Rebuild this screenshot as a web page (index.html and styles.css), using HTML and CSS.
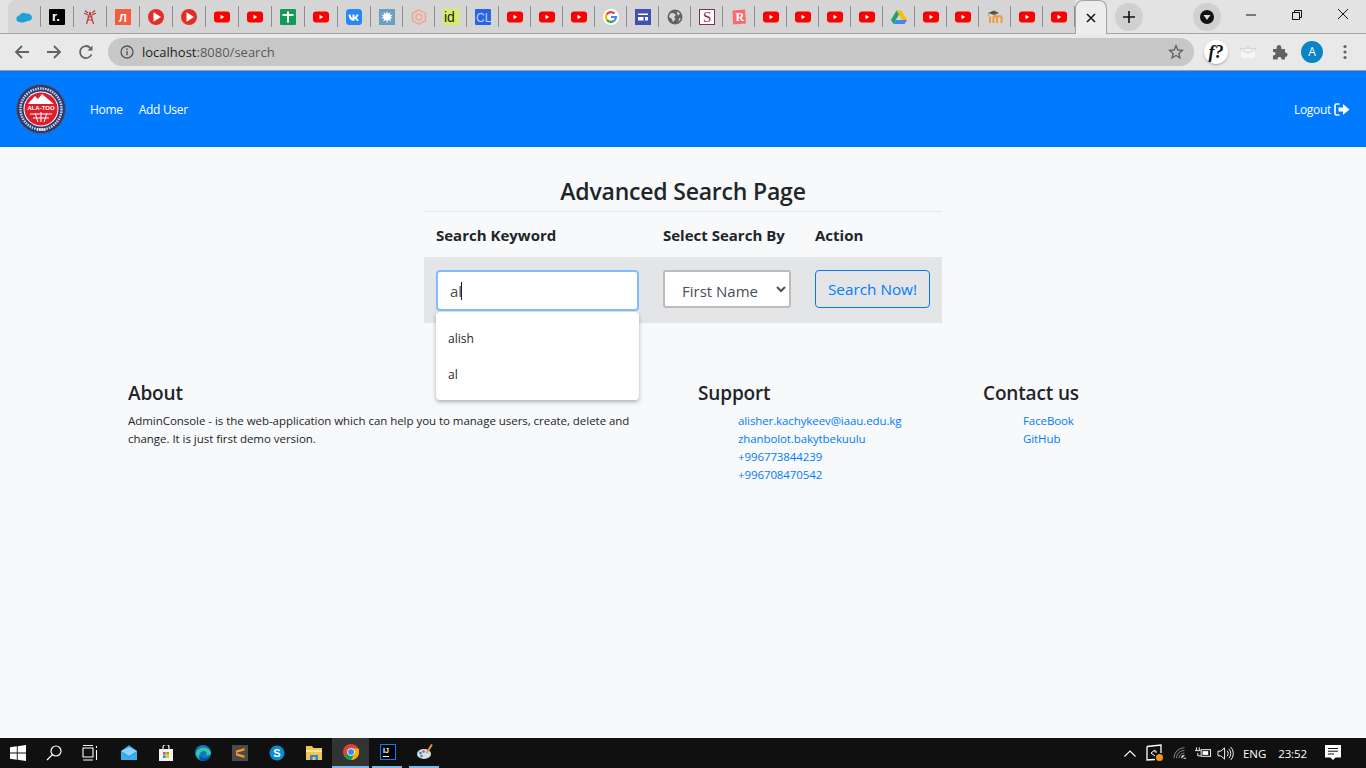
FILE: index.html
```html
<!DOCTYPE html>
<html>
<head>
    <meta charset="utf-8">
    <link rel="stylesheet" href="styles.css">
    <title>Advanced Search Page</title>
</head>
<body>

<!-- shared favicons -->
<svg class="defs" width="0" height="0">
    <symbol id="yt" viewBox="0 0 16 16"><rect x="0" y="2.500" width="16" height="11" rx="3" fill="#f00"/><path d="M6.500 5.800v4.400L10.200 8z" fill="#fff"/></symbol>
    <symbol id="play" viewBox="0 0 16 16"><circle cx="8" cy="8" r="8" fill="#e52d27"/><path d="M5.500 3.200v9.600L13 8z" fill="#fff"/></symbol>
</svg>

<div class="tabstrip">
    <div class="tab wide"><svg viewBox="0 0 16 16"><path d="M4 13C1 13 0 10.800 0.500 9 1 7 2.500 6.500 3.500 6.500 4.500 4 8 3 10 4.500 13 4 16 6 16 8.500 16 11 13.500 12.500 11 12 9 13.500 6 14 4 13z" fill="#1ea1d9"/></svg></div>
    <div class="tab wide"><svg viewBox="0 0 16 16"><rect width="16" height="16" rx="1" fill="#000"/><text x="3" y="12" class="fav-r">r.</text></svg></div>
    <div class="tab wide"><svg viewBox="0 0 16 16"><path d="M8 3 4.500 15M8 3l3.500 12M5.500 8h5M5 11h6M2 4l4 2M14 4l-4 2M3 1.500 6 4M13 1.500 10 4" stroke="#b83a3a" stroke-width="1.200" fill="none"/></svg></div>
    <div class="tab wide"><svg viewBox="0 0 16 16"><rect width="16" height="16" fill="#ee5e3f"/><text x="4" y="12.500" class="fav-l">Л</text></svg></div>
    <div class="tab wide"><svg><use href="#play"/></svg></div>
    <div class="tab wide"><svg><use href="#play"/></svg></div>
    <div class="tab wide"><svg><use href="#yt"/></svg></div>
    <div class="tab wide"><svg><use href="#yt"/></svg></div>
    <div class="tab wide"><svg viewBox="0 0 16 16"><rect width="16" height="16" rx="1" fill="#0f9d58"/><path d="M2.500 6h11M8 2.500V13.500" stroke="#fff" stroke-width="2"/></svg></div>
    <div class="tab wide"><svg><use href="#yt"/></svg></div>
    <div class="tab wide"><svg viewBox="0 0 16 16"><rect width="16" height="16" rx="3.500" fill="#2787f5"/><path d="M2.500 5.500h2c.3 2 1.200 3.200 2 3.500V5.500h2v2.700c.9-.2 1.700-1.300 2-2.700h2c-.3 1.700-1.200 2.800-2 3.400.9.500 1.900 1.500 2.400 2.900h-2.200c-.4-1.100-1.200-1.900-2.200-2.100v2.100H8C4.700 11.800 2.800 9.500 2.500 5.500z" fill="#fff"/></svg></div>
    <div class="tab"><svg viewBox="0 0 16 16"><rect width="16" height="16" fill="#6aa0bf"/><path d="M8 2l1 3 2.500-2-.8 3 3.300-.5-2.500 2.300 2.500 1.500-3 .3 1 3-2.700-1.800L8 14l-1-3.300-2.800 1.800 1-3-3.200-.3 2.600-1.700L2 5.500l3.200.5L4.500 3 7 5z" fill="#fff"/></svg></div>
    <div class="tab"><svg viewBox="0 0 16 16"><path d="M8 .8 14.500 4.400v7.200L8 15.200 1.500 11.600V4.400z" fill="none" stroke="#f0a58c" stroke-width="1.500"/><circle cx="8" cy="8" r="3" fill="none" stroke="#f0a58c" stroke-width="1.500"/></svg></div>
    <div class="tab"><svg viewBox="0 0 16 16"><rect width="16" height="16" fill="#d7ee62"/><text x="1" y="13" class="fav-id">id</text></svg></div>
    <div class="tab"><svg viewBox="0 0 16 16"><rect width="16" height="16" rx="1" fill="#2b63e3"/><text x="1" y="12.500" class="fav-cl">CL</text></svg></div>
    <div class="tab"><svg><use href="#yt"/></svg></div>
    <div class="tab"><svg><use href="#yt"/></svg></div>
    <div class="tab"><svg><use href="#yt"/></svg></div>
    <div class="tab"><svg viewBox="0 0 16 16"><circle cx="8" cy="8" r="8" fill="#fff"/><path d="M8 8h5A5 5 0 0 1 11.500 11.500" fill="none" stroke="#4285f4" stroke-width="2.200"/><path d="M3.800 10.600A5 5 0 0 0 11.500 11.500" fill="none" stroke="#34a853" stroke-width="2.200"/><path d="M3.800 5.400A5 5 0 0 0 3.800 10.600" fill="none" stroke="#fbbc05" stroke-width="2.200"/><path d="M3.800 5.400A5 5 0 0 1 11.500 4.500" fill="none" stroke="#ea4335" stroke-width="2.200"/></svg></div>
    <div class="tab"><svg viewBox="0 0 16 16"><rect width="16" height="16" fill="#3f51b5"/><path d="M3 4.500h10V6H3zM3 8h5.500v3.500H3zM10 8h3v3.500h-3z" fill="#fff"/></svg></div>
    <div class="tab"><svg viewBox="0 0 16 16"><circle cx="8" cy="8" r="7.500" fill="#5f6368"/><path d="M3 4.500 6.500 4 9 6 7 8 8.500 10 6 13 4.500 9.500 2 8zM10 2.500l3 2-1.500 2L10 5zM12 9l2 .5-2.500 3.500z" fill="#d5d5d5"/></svg></div>
    <div class="tab"><svg viewBox="0 0 16 16"><rect x=".5" y=".5" width="15" height="15" fill="#fff" stroke="#8d2a4a"/><text x="4" y="13" class="fav-s">S</text></svg></div>
    <div class="tab"><svg viewBox="0 0 16 16"><path d="M1.500 1.500 14 .5 15 14.500 2 15.500z" fill="#f86a6e"/><text x="4.500" y="12" class="fav-rr">R</text></svg></div>
    <div class="tab"><svg><use href="#yt"/></svg></div>
    <div class="tab"><svg><use href="#yt"/></svg></div>
    <div class="tab"><svg><use href="#yt"/></svg></div>
    <div class="tab"><svg><use href="#yt"/></svg></div>
    <div class="tab"><svg viewBox="0 0 16 16"><path d="M5.500 1.500h5L16 11h-5z" fill="#fbbc04"/><path d="M5.500 1.500 0 11l2.500 4L8 5.500z" fill="#1fa463"/><path d="M2.500 15h11l2.500-4H5z" fill="#4285f4"/></svg></div>
    <div class="tab"><svg><use href="#yt"/></svg></div>
    <div class="tab"><svg><use href="#yt"/></svg></div>
    <div class="tab"><svg viewBox="0 0 16 16"><path d="M3 7.500V14M6.500 14V8.500c0-2 3.500-2 3.500 0V14M10 8.500c0-2 4.500-2 4.500 0V14" fill="none" stroke="#f39a3c" stroke-width="2"/><path d="M1 4l6-2.500L12 4 7 6z" fill="#555"/><path d="M1.500 4v3" stroke="#f39a3c"/></svg></div>
    <div class="tab"><svg><use href="#yt"/></svg></div>
    <div class="tab"><svg><use href="#yt"/></svg></div>
    <div class="tab-active"><svg viewBox="0 0 10 10"><path d="M1 1l8 8M9 1 1 9" stroke="#111" stroke-width="1.500"/></svg></div>
    <div class="newtab"><svg viewBox="0 0 12 12"><path d="M6 0v12M0 6h12" stroke="#111" stroke-width="1.600"/></svg></div>
    <div class="tabsearch"><span class="tabsearch-dot"><svg viewBox="0 0 10 10"><path d="M1.500 3h7L5 8z" fill="#ddd"/></svg></span></div>
    <div class="winbtns">
        <svg viewBox="0 0 46 30"><path d="M18 15h10" stroke="#111"/></svg>
        <svg viewBox="0 0 46 30"><path d="M18.500 12.500h7v7h-7zM20.500 12.500v-2h7v7h-2" fill="none" stroke="#111"/></svg>
        <svg viewBox="0 0 46 30"><path d="M18 9l10 10M28 9 18 19" stroke="#111"/></svg>
    </div>
</div>

<div class="toolbar">
    <svg class="tool" viewBox="0 0 16 16"><path d="M15 8H2M8 2 2 8l6 6" fill="none" stroke="#5f6368" stroke-width="1.800"/></svg>
    <svg class="tool" viewBox="0 0 16 16"><path d="M1 8h13M8 2l6 6-6 6" fill="none" stroke="#5f6368" stroke-width="1.800"/></svg>
    <svg class="tool" viewBox="0 0 16 16"><path d="M13.500 10.500A6 6 0 1 1 12.300 3.800" fill="none" stroke="#5f6368" stroke-width="1.800"/><path d="M14.500 1.500v5h-5z" fill="#5f6368"/></svg>
    <div class="omnibox">
        <svg class="info" viewBox="0 0 14 14"><circle cx="7" cy="7" r="6" fill="none" stroke="#555" stroke-width="1.300"/><path d="M7 6v4.200M7 3.500v1.400" stroke="#555" stroke-width="1.400"/></svg>
        <span class="url"><span class="url-host">localhost</span>:8080/search</span>
        <svg class="star" viewBox="0 0 16 16"><path d="M8 1.800 9.800 6l4.500.4-3.400 3 1 4.400L8 11.500l-3.900 2.300 1-4.400-3.400-3L6.200 6z" fill="none" stroke="#5f6368" stroke-width="1.400"/></svg>
    </div>
    <div class="ext-f"><span>f?</span></div>
    <svg class="ext-mail" viewBox="0 0 16 14"><path d="M0 3.500h16V14H0z" fill="#f5f5f5" stroke="#ddd"/><path d="M0 3.500 8 8l8-4.500M4 4l4-3 4 3" fill="none" stroke="#ccc"/></svg>
    <svg class="ext-puzzle" viewBox="0 0 16 16"><path d="M1 5h3.500C4.500 2 5.500 1 7 1s2.500 1 2.500 4H13v3.500c2 0 2.500 1 2.500 2S15 13 13 13v2.500H9.500c0-2-1-2.500-2-2.500s-2 .5-2 2.500H1v-4c2 0 2.500-1 2.500-2S3 8 1 8z" fill="#5f6368"/></svg>
    <div class="avatar">A</div>
    <svg class="dots" viewBox="0 0 4 16"><circle cx="2" cy="2.500" r="1.600" fill="#5f6368"/><circle cx="2" cy="8" r="1.600" fill="#5f6368"/><circle cx="2" cy="13.500" r="1.600" fill="#5f6368"/></svg>
</div>

<div class="page">
    <nav class="navbar">
        <svg class="logo" viewBox="0 0 50 50">
            <circle cx="25" cy="25" r="24.500" fill="#2b3a6e" stroke="#4a5a8e"/>
            <circle cx="25" cy="25" r="20.500" fill="none" stroke="#cfd4e6" stroke-width="2.500" stroke-dasharray="1.500 1"/>
            <circle cx="25" cy="25" r="17.500" fill="#fff"/>
            <circle cx="25" cy="25" r="16.500" fill="#dd1f2d"/>
            <path d="M11 21 19 12l3 3 4-5 13 11z" fill="#fff"/>
            <rect x="9" y="20" width="32" height="7" fill="#dd1f2d"/>
            <text x="25" y="26" class="logo-text">ALA-TOO</text>
            <path d="M14 30h22M17 34h16M25 28v10M19 29l3 9M31 29l-3 9" stroke="#fff"/>
            <text x="25" y="46.500" class="logo-year">1996</text>
        </svg>
        <a href="#" class="nav-link">Home</a>
        <a href="#" class="nav-link">Add User</a>
        <a href="#" class="nav-logout">Logout
            <svg viewBox="0 0 16 13"><path d="M5.500 1H2.500A1.500 1.500 0 0 0 1 2.500v8A1.500 1.500 0 0 0 2.500 12h3" fill="none" stroke="#fff" stroke-width="1.600"/><path d="M4.500 4.500H9V1l6.500 5.500L9 12V8.500H4.500z" fill="#fff"/></svg>
        </a>
    </nav>

    <h3 class="title">Advanced Search Page</h3>

    <table class="search-table">
        <thead>
        <tr>
            <th class="col-key">Search Keyword</th>
            <th class="col-by">Select Search By</th>
            <th>Action</th>
        </tr>
        </thead>
        <tbody>
        <tr>
            <td class="keyword-cell">
                <div class="keyword-wrap">
                    <input class="keyword" type="text" value="al">
                    <span class="caret"></span>
                    <div class="suggest">
                        <div>alish</div>
                        <div>al</div>
                    </div>
                </div>
            </td>
            <td>
                <select class="search-by">
                    <option>First Name</option>
                </select>
            </td>
            <td><button class="btn-search">Search Now!</button></td>
        </tr>
        </tbody>
    </table>

    <footer class="foot">
        <div class="foot-col">
            <h5>About</h5>
            <p>AdminConsole - is the web-application which can help you to manage users, create, delete and change. It is just first demo version.</p>
        </div>
        <div class="foot-col">
            <h5>Support</h5>
            <ul>
                <li><a href="#">alisher.kachykeev@iaau.edu.kg</a></li>
                <li><a href="#">zhanbolot.bakytbekuulu</a></li>
                <li><a href="#">+996773844239</a></li>
                <li><a href="#">+996708470542</a></li>
            </ul>
        </div>
        <div class="foot-col">
            <h5>Contact us</h5>
            <ul>
                <li><a href="#">FaceBook</a></li>
                <li><a href="#">GitHub</a></li>
            </ul>
        </div>
    </footer>
</div>

<div class="taskbar">
    <div class="task sys"><svg viewBox="0 0 16 16"><path d="M0 2.300 6.800 1.300v6.200H0zM7.700 1.200 16 0v7.500H7.700zM0 8.400h6.800v6.300L0 13.700zM7.700 8.400H16V16l-8.300-1.200z" fill="#fff"/></svg></div>
    <div class="task sys"><svg viewBox="0 0 16 16"><circle cx="10" cy="6" r="5" fill="none" stroke="#fff" stroke-width="1.200"/><path d="M6.500 9.500 1 15" stroke="#fff" stroke-width="1.300"/></svg></div>
    <div class="task sys"><svg viewBox="0 0 16 16"><path d="M1 3h10v9H1zM1 .5h10M1 15h10M14.500 1v2M14.500 5v10" fill="none" stroke="#fff" stroke-width="1.100"/></svg></div>
    <div class="task first-app"><svg viewBox="0 0 16 16"><path d="M0 6 8 0l8 6v9H0z" fill="#1c9be6"/><path d="M0 6l8 5 8-5-8-4z" fill="#8fd2f7"/><path d="M0 15V7l8 5 8-5v8z" fill="#37ade9"/></svg></div>
    <div class="task"><svg viewBox="0 0 16 16"><path d="M1 4h14v12H1z" fill="#f3f3f3"/><path d="M5 5V2.500a3 3 0 0 1 6 0V5" fill="none" stroke="#f3f3f3" stroke-width="1.200"/><path d="M5 7h2.700v2.700H5z" fill="#f25022"/><path d="M8.300 7H11v2.700H8.300z" fill="#7fba00"/><path d="M5 10.300h2.700V13H5z" fill="#00a4ef"/><path d="M8.300 10.300H11V13H8.300z" fill="#ffb900"/></svg></div>
    <div class="task"><svg viewBox="0 0 16 16"><circle cx="8" cy="8" r="8" fill="#1377c9"/><path d="M1 8c1-6 13-8 15 0 0 2-3 2.500-5 2 2-2-1-5-4-3.500-3 1.500-3 5-.5 7.500C3.500 13.500 1 11 1 8z" fill="#34c9a5"/><path d="M8 16c-3-1-5-4-3-7-.7 2.500 2.500 5 6 4 1.500-.5 3-1 4-2.500-1 3.500-4 5.500-7 5.500z" fill="#0a4f9e"/></svg></div>
    <div class="task"><svg viewBox="0 0 16 16"><rect width="16" height="16" fill="#4a4a4a"/><path d="M12.500 3v2.500L4 8V5.500zM4 8l8.500 2.500V13L4 10.500z" fill="#f89822"/></svg></div>
    <div class="task"><svg viewBox="0 0 16 16"><circle cx="8" cy="8" r="7.500" fill="#0a8bd6"/><text x="8" y="12" class="skype-s">S</text></svg></div>
    <div class="task"><svg viewBox="0 0 16 16"><path d="M0 1h6l1.500 2H16v12H0z" fill="#f3c64f"/><path d="M0 5h16v2H0z" fill="#fbe59b"/><path d="M4 15v-5h8v5h-2.500v-3h-3v3z" fill="#2a8dd4"/></svg></div>
    <div class="task active-chrome"><svg viewBox="0 0 16 16"><circle cx="8" cy="8" r="8" fill="#db4437"/><path d="M8 8 1 12A8 8 0 0 0 8 16l4-7z" fill="#0f9d58"/><path d="M8 4.500h7.400A8 8 0 0 1 8 16l4-7z" fill="#f4b400"/><circle cx="8" cy="8" r="3.800" fill="#fff"/><circle cx="8" cy="8" r="3" fill="#4285f4"/></svg></div>
    <div class="task running"><svg viewBox="0 0 16 16"><rect x=".5" y=".5" width="15" height="15" fill="#000" stroke="#087cfa"/><text x="3" y="8.500" class="ij">IJ</text><path d="M3 12.500h6" stroke="#fff"/></svg></div>
    <div class="task running"><svg viewBox="0 0 16 16"><ellipse cx="7" cy="10" rx="7" ry="5" fill="#cfe0ea"/><circle cx="3.500" cy="9" r="1.300" fill="#2b7bd1"/><circle cx="6.500" cy="7.500" r="1.300" fill="#e64b3c"/><circle cx="4.500" cy="12" r="1.300" fill="#3aa655"/><path d="M15 .5 9.500 9" stroke="#e8912d" stroke-width="2"/></svg></div>

    <div class="tray">
        <svg class="tray-chev" viewBox="0 0 12 7"><path d="M.5 6.500 6 1l5.500 5.500" fill="none" stroke="#fff" stroke-width="1.100"/></svg>
        <svg class="tray-win" viewBox="0 0 18 18"><path d="M1 2.500 15 1v8M1 2.500V16l8-.5" fill="none" stroke="#fff" stroke-width="1.300"/><path d="M5 9l4-3v2h2M9 12 5 9" fill="none" stroke="#fff"/><circle cx="13.500" cy="13.500" r="3.500" fill="#f7941e"/></svg>
        <svg class="tray-wifi" viewBox="0 0 16 16"><path d="M1 14a12 12 0 0 1 12-12M4 14a9 9 0 0 1 9-9M7 14a6 6 0 0 1 6-6" fill="none" stroke="#9a9a9a"/><path d="M10 14a3 3 0 0 1 3-3" fill="none" stroke="#fff" stroke-width="1.200"/><path d="M12 14h3" stroke="#fff"/></svg>
        <svg class="tray-batt" viewBox="0 0 18 12"><path d="M1.500 0v3M4.500 0v3M0 3.500h6M3 6v3h3" fill="none" stroke="#fff"/><rect x="6.500" y="2.500" width="10" height="7" fill="none" stroke="#fff"/><rect x="8" y="4" width="6" height="4" fill="#fff"/></svg>
        <svg class="tray-vol" viewBox="0 0 18 16"><path d="M1 5.500h3L8 2v12l-4-3.500H1z" fill="none" stroke="#fff"/><path d="M10.500 5a4 4 0 0 1 0 6M12.500 3a7 7 0 0 1 0 10M14.500 1a10 10 0 0 1 0 14" fill="none" stroke="#fff"/></svg>
        <span class="tray-lang">ENG</span>
        <span class="tray-time">23:52</span>
        <svg class="tray-note" viewBox="0 0 16 16"><path d="M0 0h16v12.500h-5.500L8 15l-2.500-2.500H0z" fill="#fff"/><path d="M3 3.500h10M3 6.200h10M3 9h6" stroke="#111"/></svg>
    </div>
</div>

</body>
</html>
```

FILE: styles.css
```css
html, body {
    margin: 0;
    height: 100%;
}

body {
    width: 1366px;
    height: 768px;
    display: flex;
    flex-direction: column;
    overflow: hidden;
    font-family: "Open Sans", "Noto Sans", sans-serif;
    color: #212529;
    background: #f8f9fa;
}

.defs {
    position: absolute;
}

/* browser tabs */
.tabstrip {
    height: 34px;
    flex: none;
    box-sizing: border-box;
    display: flex;
    padding-left: 8px;
    background: #e3e3e3;
    border-bottom: 1px solid #a3a3a3;
}

.tab {
    width: 32px;
    height: 33px;
    flex: none;
    box-sizing: border-box;
    padding-right: 1px;
    display: flex;
    align-items: center;
    justify-content: center;
    background-color: #d5d5d5;
    background-image: linear-gradient(#8d8d8d, #8d8d8d);
    background-repeat: no-repeat;
    background-size: 1px 21px;
    background-position: right 6px;
}

.tab.wide {
    width: 33px;
}

.tab:first-child {
    border-top-left-radius: 8px;
}

.tab svg {
    width: 16px;
    height: 16px;
}

.tab-active {
    width: 32px;
    height: 34px;
    flex: none;
    display: flex;
    align-items: center;
    justify-content: center;
    background: #ededed;
    border: 1px solid #a3a3a3;
    border-bottom: 0;
    border-radius: 8px 8px 0 0;
    box-sizing: border-box;
}

.tab-active svg {
    width: 10px;
    height: 10px;
}

.newtab, .tabsearch {
    width: 28px;
    height: 28px;
    flex: none;
    margin-top: 3px;
    border-radius: 50%;
    background: #d0d0d0;
    display: flex;
    align-items: center;
    justify-content: center;
}

.newtab {
    margin-left: 8px;
}

.newtab svg {
    width: 12px;
    height: 12px;
}

.tabsearch {
    margin-left: 50px;
}

.tabsearch-dot {
    width: 14px;
    height: 14px;
    border-radius: 50%;
    background: #111;
    display: flex;
    align-items: center;
    justify-content: center;
}

.tabsearch-dot svg {
    width: 10px;
    height: 10px;
}

.winbtns {
    margin-left: auto;
    display: flex;
}

.winbtns svg {
    width: 46px;
    height: 30px;
}

.fav-r { font: bold 13px "Liberation Sans", sans-serif; fill: #fff; }
.fav-l { font: bold 11px "Liberation Sans", sans-serif; fill: #fff; }
.fav-id { font: 14px "Liberation Sans", sans-serif; fill: #222; }
.fav-cl { font: 12px "Liberation Sans", sans-serif; fill: #bcd2ff; }
.fav-s { font: 15px "Liberation Serif", serif; fill: #8d2a4a; }
.fav-rr { font: bold 12px "Liberation Serif", serif; fill: #fff; }

/* address bar */
.toolbar {
    height: 37px;
    flex: none;
    box-sizing: border-box;
    display: flex;
    align-items: center;
    padding: 0 0 0 14px;
    background: #e9e9e9;
    border-bottom: 1px solid #9a9a9a;
}

.tool {
    width: 16px;
    height: 16px;
    flex: none;
    margin-right: 16px;
}

.omnibox {
    width: 1086px;
    height: 28px;
    flex: none;
    box-sizing: border-box;
    margin-left: -2px;
    padding: 0 10px 0 12px;
    display: flex;
    align-items: center;
    border-radius: 14px;
    background: #c7c7c7;
}

.info {
    width: 14px;
    height: 14px;
}

.url {
    margin-left: 8px;
    font-size: 13px;
    color: #5a5a5a;
}

.url-host {
    color: #222;
}

.star {
    width: 16px;
    height: 16px;
    margin-left: auto;
}

.ext-f {
    width: 24px;
    height: 24px;
    flex: none;
    margin-left: 10px;
    border-radius: 50%;
    background: #fff;
    box-shadow: 0 1px 2px rgba(0, 0, 0, .3);
    display: flex;
    align-items: center;
    justify-content: center;
    font: italic bold 18px "Liberation Serif", serif;
    color: #111;
}

.ext-mail {
    width: 16px;
    height: 14px;
    flex: none;
    margin-left: 12px;
}

.ext-puzzle {
    width: 16px;
    height: 16px;
    flex: none;
    margin-left: 16px;
}

.avatar {
    width: 22px;
    height: 22px;
    flex: none;
    margin-left: 13px;
    border-radius: 50%;
    background: #0b84c6;
    color: #fff;
    font-size: 12px;
    line-height: 22px;
    text-align: center;
}

.dots {
    width: 4px;
    height: 16px;
    flex: none;
    margin-left: 20px;
}

/* app page */
.page {
    flex: 1;
    min-height: 0;
}

.navbar {
    height: 76px;
    display: flex;
    align-items: center;
    padding: 0 16px;
    background: #007bff;
}

.logo {
    width: 50px;
    height: 50px;
    margin-right: 24px;
    margin-top: -1px;
}

.logo-text {
    font: bold 6px "Liberation Sans", sans-serif;
    fill: #fff;
    text-anchor: middle;
}

.logo-year {
    font: bold 4px "Liberation Sans", sans-serif;
    fill: #fff;
    text-anchor: middle;
}

.nav-link {
    margin-right: 16px;
    font-size: 12px;
    letter-spacing: -.3px;
    color: #fff;
    text-decoration: none;
}

.nav-logout {
    margin-left: auto;
    display: flex;
    align-items: center;
    gap: 3px;
    font-size: 12px;
    letter-spacing: -.3px;
    color: #fff;
    text-decoration: none;
}

.nav-logout svg {
    width: 16px;
    height: 13px;
}

.title {
    margin: 28px 0 4px;
    font-size: 23px;
    font-weight: 600;
    line-height: 32px;
    letter-spacing: -.2px;
    text-align: center;
}

.search-table {
    width: 518px;
    margin: 0 auto;
    border-collapse: collapse;
    table-layout: fixed;
    border-top: 1px solid #e4e6e9;
}

.search-table th {
    box-sizing: border-box;
    padding: 13px 12px 11px;
    font-size: 15px;
    line-height: 21px;
    text-align: left;
    font-weight: 700;
}

.col-key {
    width: 227px;
}

.col-by {
    width: 152px;
}

.search-table td {
    padding: 13px 12px 0;
    height: 53px;
    vertical-align: top;
    background: #e4e5e6;
}

.keyword-wrap {
    position: relative;
    height: 41px;
}

.keyword {
    width: 203px;
    height: 41px;
    box-sizing: border-box;
    padding: 0 12px;
    border: 2px solid #80bdff;
    border-radius: 4px;
    outline: 0;
    background: #fff;
    font: 15px "Open Sans", sans-serif;
    color: #495057;
}

.caret {
    position: absolute;
    left: 25px;
    top: 12px;
    width: 1px;
    height: 18px;
    background: #222;
}

.suggest {
    position: absolute;
    left: 0;
    top: 42px;
    width: 203px;
    box-sizing: border-box;
    padding: 9px 12px 7px;
    background: #fff;
    border-radius: 4px;
    box-shadow: 0 2px 4px rgba(0, 0, 0, .3);
    font-size: 12px;
}

.suggest div {
    height: 36px;
    line-height: 36px;
}

.search-by {
    width: 128px;
    height: 38px;
    box-sizing: border-box;
    padding: 4px 0 0 13px;
    border: 2px solid #bbb;
    border-radius: 3px;
    background-color: #fff;
    font: 15px "Open Sans", sans-serif;
    color: #495057;
    outline: 0;
}

.btn-search {
    width: 115px;
    height: 38px;
    box-sizing: border-box;
    padding: 0;
    border: 1px solid #007bff;
    border-radius: 4px;
    background: transparent;
    font: 15.3px "Open Sans", sans-serif;
    color: #007bff;
}

.foot {
    display: grid;
    grid-template-columns: 570px 285px 1fr;
    margin: 55px 0 0 128px;
}

.foot h5 {
    margin: 0 0 4px;
    font-size: 19px;
    font-weight: 600;
    line-height: 30px;
    letter-spacing: -.15px;
}

.foot p {
    width: 510px;
    margin: 0;
    font-size: 11.5px;
    letter-spacing: -.04px;
    line-height: 18px;
}

.foot ul {
    margin: 0;
    padding-left: 40px;
    list-style: none;
    font-size: 11.5px;
    letter-spacing: -.1px;
    line-height: 18px;
}

.foot a {
    color: #007bff;
    text-decoration: none;
}

/* windows taskbar */
.taskbar {
    height: 30px;
    flex: none;
    display: flex;
    align-items: center;
    background: #101010;
}

.task {
    width: 37px;
    height: 30px;
    flex: none;
    box-sizing: border-box;
    display: flex;
    align-items: center;
    justify-content: center;
}

.task svg {
    width: 16px;
    height: 16px;
}

.task.sys {
    width: 36px;
}

.task.first-app {
    margin-left: 2px;
}

.active-chrome {
    background: #333;
    border-bottom: 2px solid #76b9ed;
}

.running {
    border-bottom: 2px solid #76b9ed;
    border-image: linear-gradient(90deg, transparent 4px, #76b9ed 4px, #76b9ed 32px, transparent 32px) 1;
}

.skype-s { font: bold 11px "Liberation Sans", sans-serif; fill: #fff; text-anchor: middle; }
.ij { font: bold 7px "Liberation Sans", sans-serif; fill: #fff; }

.tray {
    margin-left: auto;
    display: flex;
    align-items: center;
    color: #fff;
    font-size: 11.5px;
    letter-spacing: -.1px;
}

.tray-chev { width: 12px; height: 7px; margin-right: 10px; }
.tray-win { width: 18px; height: 18px; margin-right: 9px; }
.tray-wifi { width: 14px; height: 14px; margin-right: 8px; }
.tray-batt { width: 17px; height: 12px; margin-right: 5px; }
.tray-vol { width: 17px; height: 15px; margin-right: 9px; }
.tray-lang { margin-right: 12px; }
.tray-time { margin-right: 18px; }
.tray-note { width: 16px; height: 16px; margin-right: 25px; }
```
